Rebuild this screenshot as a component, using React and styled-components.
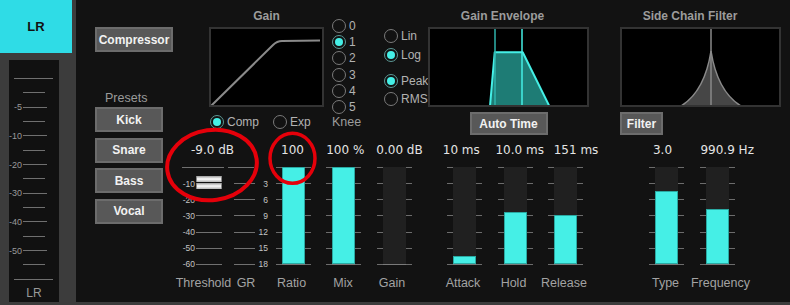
import React from 'react';
import styled, { createGlobalStyle } from 'styled-components';

const GlobalStyle = createGlobalStyle`
  html, body { margin: 0; padding: 0; background: #3c3c3c; }
  body { font-family: "Liberation Sans", Arial, sans-serif; }
`;

const Page = styled.div`
  position: relative;
  display: flex;
  width: 790px;
  height: 305px;
  background: #3c3c3c;
  overflow: hidden;
  font-family: "Liberation Sans", Arial, sans-serif;
`;

/* ---------- left strip ---------- */
const Sidebar = styled.div`
  width: 76px;
  flex: none;
  display: flex;
  flex-direction: column;
`;

const ChannelTab = styled.div`
  width: 72px;
  height: 53px;
  background: #2fdce6;
  display: flex;
  align-items: center;
  justify-content: center;
  font-weight: bold;
  font-size: 13px;
  color: #121212;
`;

const MeterBox = styled.div`
  margin: 7px 0 0 9px;
  width: 50px;
  height: 242px;
  box-sizing: border-box;
  padding-top: 18px;
  background: #111;
  display: flex;
  flex-direction: column;
`;

const MeterScale = styled.div`
  height: 202px;
  display: flex;
  flex-direction: column;
  justify-content: space-between;
`;

const TickRow = styled.div`
  height: 1px;
  display: flex;
  align-items: center;
`;

const TickLabel = styled.span`
  flex: none;
  width: ${(p) => p.$w}px;
  text-align: right;
  font-size: ${(p) => p.$fs || 9}px;
  line-height: 10px;
  color: ${(p) => p.$c || '#9a9a9a'};
  white-space: nowrap;
`;

const TickLine = styled.div`
  flex: none;
  height: 1px;
  margin-left: ${(p) => p.$ml || 0}px;
  width: ${(p) => p.$w}px;
  background: ${(p) => p.$c || '#707070'};
`;

const MeterName = styled.div`
  margin-top: 6px;
  line-height: 14px;
  text-align: center;
  font-size: 12px;
  color: #9a9a9a;
`;

/* ---------- main panel ---------- */
const Main = styled.div`
  flex: 1;
  height: 302px;
  box-sizing: border-box;
  background: #121212;
  display: flex;
  padding-left: 19px;
`;

const PresetColumn = styled.div`
  width: 78px;
  flex: none;
  display: flex;
  flex-direction: column;
  align-items: flex-start;
  padding-top: 27px;
`;

const Button = styled.div`
  width: ${(p) => p.$w}px;
  height: ${(p) => p.$h || 25}px;
  margin-top: ${(p) => p.$mt || 0}px;
  box-sizing: border-box;
  background: #585858;
  border: 2px solid #6c6c6c;
  color: #f2f2f2;
  font-weight: bold;
  font-size: 12px;
  display: flex;
  align-items: center;
  justify-content: center;
  flex: none;
`;

const PresetsLabel = styled.div`
  margin-top: 39px;
  padding-left: 10px;
  line-height: 14px;
  font-size: 12.5px;
  color: #9a9a9a;
`;

const RightArea = styled.div`
  flex: 1;
  display: flex;
  flex-direction: column;
`;

const TopRow = styled.div`
  height: 140px;
  display: flex;
  align-items: flex-start;
`;

const Section = styled.div`
  flex: none;
  width: ${(p) => p.$w}px;
  margin-left: ${(p) => p.$ml || 0}px;
  display: flex;
  flex-direction: column;
  align-items: ${(p) => p.$align || 'stretch'};
  padding-top: ${(p) => p.$pt || 0}px;
`;

const SectionTitle = styled.div`
  align-self: stretch;
  padding: 9px ${(p) => p.$pr || 0}px 4px 0;
  line-height: 14px;
  text-align: center;
  font-weight: bold;
  font-size: 12px;
  color: #9c9c9c;
  white-space: nowrap;
`;

const Plot = styled.div`
  align-self: stretch;
  height: 80px;
  box-sizing: border-box;
  border: 2px solid #333;
  background: #000;
  svg { display: block; width: 100%; height: 100%; }
`;

const RadioRow = styled.div`
  display: flex;
  align-items: center;
  margin-top: 8px;
  padding-left: 1px;
`;

const RadioItem = styled.div`
  display: flex;
  align-items: center;
  gap: 3px;
  height: 14px;
  margin-top: ${(p) => p.$mt || 0}px;
  margin-left: ${(p) => p.$ml || 0}px;
  font-size: 12px;
  color: #b2b2b2;
  white-space: nowrap;
`;

const RadioDot = styled.div`
  flex: none;
  width: 14px;
  height: 14px;
  box-sizing: border-box;
  border-radius: 50%;
  border: 1.5px solid ${(p) => (p.$on ? '#5b9794' : '#7a7a7a')};
  display: flex;
  align-items: center;
  justify-content: center;
`;

const RadioInner = styled.div`
  width: 8px;
  height: 8px;
  border-radius: 50%;
  background: #45efe6;
`;

const KneeLabel = styled.div`
  margin-top: 1px;
  line-height: 14px;
  font-size: 12.5px;
  color: #9c9c9c;
`;

/* ---------- bottom row ---------- */
const BottomRow = styled.div`
  display: flex;
  align-items: flex-start;
`;

const Channel = styled.div`
  flex: none;
  width: ${(p) => p.$w}px;
  margin-left: ${(p) => p.$ml || 0}px;
  display: flex;
  flex-direction: column;
`;

const ValueText = styled.div`
  height: 20px;
  line-height: 20px;
  display: flex;
  justify-content: center;
  white-space: nowrap;
  font-family: "DejaVu Sans", Verdana, sans-serif;
  font-size: 12px;
  color: #e4e4e4;
  transform: translateX(${(p) => p.$shift || 0}px);
`;

const SliderArea = styled.div`
  position: relative;
  margin-top: 7px;
  height: 98px;
  display: flex;
`;

const ScaleColumn = styled.div`
  flex: none;
  width: ${(p) => p.$w}px;
  height: 98px;
  display: flex;
  flex-direction: column;
  justify-content: space-between;
`;

const Track = styled.div`
  flex: none;
  width: 23px;
  height: 98px;
  box-sizing: border-box;
  background: #202020;
  border-bottom: 1px solid #7a7a7a;
  display: flex;
  flex-direction: column;
  justify-content: flex-end;
`;

const Fill = styled.div`
  background: #45efe6;
  box-shadow: inset 0 0 0 1px #2aa9a2;
`;

const ChannelLabel = styled.div`
  margin-top: 10px;
  line-height: 16px;
  display: flex;
  justify-content: center;
  white-space: nowrap;
  font-size: 12.5px;
  color: #a3a3a3;
  transform: translateX(${(p) => p.$shift || 0}px);
`;

const Fader = styled.div`
  position: absolute;
  left: 23px;
  top: 9px;
  width: 26px;
  display: flex;
  flex-direction: column;
  gap: 1px;
`;

const FaderBar = styled.div`
  height: 6px;
  background: linear-gradient(to bottom, #9a9a9a, #ffffff 50%, #b4b4b4);
  box-shadow: inset 1px 0 0 #888, inset -1px 0 0 #888;
`;

const Overlay = styled.svg`
  position: absolute;
  left: 0;
  top: 0;
  width: 790px;
  height: 305px;
  pointer-events: none;
`;

/* ---------- pieces ---------- */
function Radio({ on, label, mt, ml }) {
  return (
    <RadioItem $mt={mt} $ml={ml}>
      <RadioDot $on={on}>{on && <RadioInner />}</RadioDot>
      {label}
    </RadioItem>
  );
}

const meterRows = ['L', 'S', '-5', 'S', '-10', 'S', '-20', 'S', '-30', 'S', '-40', 'S', '-50', 'S', 'L'];

function Meter() {
  return (
    <MeterBox>
      <MeterScale>
        {meterRows.map((r, i) => (
          <TickRow key={i}>
            {r === 'L' && <TickLine $ml={5} $w={39} />}
            {r === 'S' && <TickLine $ml={14} $w={22} />}
            {r !== 'L' && r !== 'S' && (
              <>
                <TickLabel $w={13}>{r}</TickLabel>
                <TickLine $ml={1} $w={24} />
              </>
            )}
          </TickRow>
        ))}
      </MeterScale>
      <MeterName>LR</MeterName>
    </MeterBox>
  );
}

function Ticks() {
  return (
    <ScaleColumn $w={6}>
      {Array.from({ length: 7 }).map((_, i) => (
        <TickLine key={i} $w={6} $c="#6c6c6c" />
      ))}
    </ScaleColumn>
  );
}

function BarChannel({ name, value, fill, ml, vs, ls }) {
  return (
    <Channel $w={35} $ml={ml}>
      <ValueText $shift={vs}>{value}</ValueText>
      <SliderArea>
        <Ticks />
        <Track>
          <Fill style={{ height: `${(fill / 100) * 97}px` }} />
        </Track>
        <Ticks />
      </SliderArea>
      <ChannelLabel $shift={ls}>{name}</ChannelLabel>
    </Channel>
  );
}

const thresholdLabels = ['-10', '-20', '-30', '-40', '-50', '-60'];
const grLabels = ['3', '6', '9', '12', '15', '18'];

function ThresholdChannel() {
  return (
    <Channel $w={53}>
      <ValueText $shift={13}>-9.0 dB</ValueText>
      <SliderArea>
        <ScaleColumn $w={53}>
          <TickRow>
            <TickLine $ml={9} $w={42} />
          </TickRow>
          {thresholdLabels.map((l) => (
            <TickRow key={l}>
              <TickLabel $w={22} $fs={8.5} $c="#c4c4c4">{l}</TickLabel>
              <TickLine $ml={1} $w={26} />
            </TickRow>
          ))}
        </ScaleColumn>
        <Fader>
          <FaderBar />
          <FaderBar />
        </Fader>
      </SliderArea>
      <ChannelLabel $shift={4}>Threshold</ChannelLabel>
    </Channel>
  );
}

function GRChannel() {
  return (
    <Channel $w={49.5}>
      <ValueText />
      <SliderArea>
        <ScaleColumn $w={49.5}>
          <TickRow>
            <TickLine $ml={2} $w={26} />
          </TickRow>
          {grLabels.map((l) => (
            <TickRow key={l}>
              <TickLine $ml={8} $w={21} />
              <TickLabel $w={13} $fs={8.5} $c="#c4c4c4">{l}</TickLabel>
            </TickRow>
          ))}
        </ScaleColumn>
      </SliderArea>
      <ChannelLabel $shift={-4.75}>GR</ChannelLabel>
    </Channel>
  );
}

const channels = [
  { name: 'Ratio', value: '100', fill: 100, ml: 0, vs: -0.5, ls: -1.5 },
  { name: 'Mix', value: '100 %', fill: 100, ml: 15, vs: 2.3, ls: 0 },
  { name: 'Gain', value: '0.00 dB', fill: 0, ml: 16, vs: 5.5, ls: -2 },
  { name: 'Attack', value: '10 ms', fill: 8, ml: 35.5, vs: -3.2, ls: -1.5 },
  { name: 'Hold', value: '10.0 ms', fill: 54, ml: 15.5, vs: 4.7, ls: -1.5 },
  { name: 'Release', value: '151 ms', fill: 50.5, ml: 15.5, vs: 10.5, ls: -1.5 },
  { name: 'Type', value: '3.0', fill: 75, ml: 66, vs: -4, ls: -1 },
  { name: 'Frequency', value: '990.9 Hz', fill: 57, ml: 15.5, vs: 10.2, ls: 3.5 },
];

export default function App() {
  return (
    <Page>
      <GlobalStyle />
      <Sidebar>
        <ChannelTab>LR</ChannelTab>
        <Meter />
      </Sidebar>

      <Main>
        <PresetColumn>
          <Button $w={78}>Compressor</Button>
          <PresetsLabel>Presets</PresetsLabel>
          <Button $w={68} $mt={2}>Kick</Button>
          <Button $w={68} $mt={5.5}>Snare</Button>
          <Button $w={68} $mt={5.5}>Bass</Button>
          <Button $w={68} $mt={5.5}>Vocal</Button>
        </PresetColumn>

        <RightArea>
          <TopRow>
            <Section $w={115} $ml={36}>
              <SectionTitle>Gain</SectionTitle>
              <Plot>
                <svg viewBox="2 2 111 76">
                  <path d="M2 79 L64 18 Q68 14 73 14 L111 13.5" fill="none" stroke="#8a8a8a" strokeWidth="2" />
                </svg>
              </Plot>
              <RadioRow>
                <Radio on label="Comp" />
                <Radio label="Exp" ml={14} />
              </RadioRow>
            </Section>

            <Section $w={28} $ml={8} $pt={18.7}>
              <Radio label="0" />
              <Radio on label="1" mt={2.3} />
              <Radio label="2" mt={2.3} />
              <Radio label="3" mt={2.3} />
              <Radio label="4" mt={2.3} />
              <Radio label="5" mt={2.3} />
              <KneeLabel>Knee</KneeLabel>
            </Section>

            <Section $w={44} $ml={24} $pt={29}>
              <Radio label="Lin" />
              <Radio on label="Log" mt={5} />
              <Radio on label="Peak" mt={11.7} />
              <Radio label="RMS" mt={4.3} />
            </Section>

            <Section $w={161} $align="center">
              <SectionTitle $pr={12}>Gain Envelope</SectionTitle>
              <Plot>
                <svg viewBox="2 2 157 76">
                  <polygon points="62,79 66.7,25.3 94.7,25.3 121.3,79" fill="#1e7c75" stroke="#45efe6" strokeWidth="2" strokeLinejoin="round" />
                  <line x1="67" y1="2" x2="67" y2="79" stroke="#2fb3ac" strokeWidth="1.5" />
                  <line x1="94" y1="2" x2="94" y2="79" stroke="#45efe6" strokeWidth="1.5" />
                </svg>
              </Plot>
              <Button $w={78} $h={23} $mt={5}>Auto Time</Button>
            </Section>

            <Section $w={161} $ml={31} $align="flex-start">
              <SectionTitle $pr={21}>Side Chain Filter</SectionTitle>
              <Plot>
                <svg viewBox="2 2 157 76">
                  <path d="M61 79 C74 71 86 56 91 24 C96 56 108 71 121 79 Z" fill="#464646" stroke="#8a8a8a" strokeWidth="1.5" />
                  <line x1="91" y1="2" x2="91" y2="79" stroke="#8a8a8a" strokeWidth="1.5" />
                </svg>
              </Plot>
              <Button $w={43} $h={23} $mt={5}>Filter</Button>
            </Section>
          </TopRow>

          <BottomRow>
            <ThresholdChannel />
            <GRChannel />
            {channels.map((c) => (
              <BarChannel key={c.name} {...c} />
            ))}
          </BottomRow>
        </RightArea>
      </Main>

      <Overlay viewBox="0 0 790 305">
        <ellipse cx="212" cy="165" rx="45" ry="35" fill="none" stroke="#e5000a" strokeWidth="4" transform="rotate(-8 212 165)" />
        <ellipse cx="292.5" cy="158.3" rx="22.5" ry="25" fill="none" stroke="#e5000a" strokeWidth="3.5" />
      </Overlay>
    </Page>
  );
}
